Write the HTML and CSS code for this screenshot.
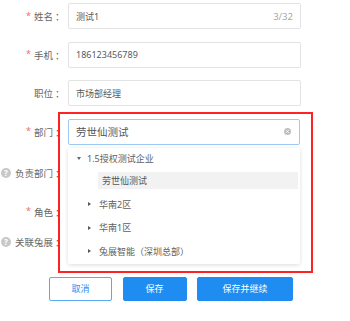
FILE: index.html
```html
<!DOCTYPE html>
<html lang="zh-CN">
<head>
    <meta charset="UTF-8">
    <title>编辑成员</title>
    <link rel="stylesheet" href="styles.css">
</head>
<body>
    <div class="page">
        <div class="form">
            <div class="row">
                <label class="label"><span class="star">*</span>姓名<span class="colon">：</span></label>
                <div class="input">
                    <span class="value">测试1</span>
                    <span class="count">3/32</span>
                </div>
            </div>
            <div class="row">
                <label class="label"><span class="star">*</span>手机<span class="colon">：</span></label>
                <div class="input"><span class="value">186123456789</span></div>
            </div>
            <div class="row">
                <label class="label">职位<span class="colon">：</span></label>
                <div class="input"><span class="value">市场部经理</span></div>
            </div>
            <div class="row">
                <label class="label"><span class="star">*</span>部门<span class="colon">：</span></label>
                <div class="input select">
                    <span class="value big">劳世仙测试</span>
                    <span class="clear">
                        <svg viewBox="0 0 8 8" width="8" height="8"><circle cx="4" cy="4" r="4" fill="#c0c0c0"/><path d="M2.6 2.6 5.4 5.4M5.4 2.6 2.6 5.4" stroke="#fff" stroke-width="1"/></svg>
                    </span>
                </div>
            </div>
            <div class="row row-lead">
                <label class="label"><span class="help">?</span>负责部门<span class="colon">：</span></label>
            </div>
            <div class="row row-role">
                <label class="label"><span class="star">*</span>角色<span class="colon">：</span></label>
            </div>
            <div class="row row-link">
                <label class="label"><span class="help">?</span>关联兔展<span class="colon">：</span></label>
            </div>
            <div class="actions">
                <button class="btn btn-plain">取消</button>
                <button class="btn btn-primary btn-save">保存</button>
                <button class="btn btn-primary btn-wide">保存并继续</button>
            </div>
        </div>

        <!-- department tree dropdown -->
        <div class="dropdown">
            <div class="node node-root">
                <span class="caret down"></span>
                <span>1.5授权测试企业</span>
            </div>
            <div class="node node-leaf">
                <span class="leaf-label">劳世仙测试</span>
            </div>
            <div class="node node-child">
                <span class="caret right"></span>
                <span>华南2区</span>
            </div>
            <div class="node node-child">
                <span class="caret right"></span>
                <span>华南1区</span>
            </div>
            <div class="node node-child">
                <span class="caret right"></span>
                <span>兔展智能（深圳总部）</span>
            </div>
        </div>

        <div class="highlight"></div>
    </div>
</body>
</html>
```

FILE: styles.css
```css
html, body {
    margin: 0;
    padding: 0;
    background: #ffffff;
    font-family: "Noto Sans", "Noto Sans CJK SC", sans-serif;
}
.page {
    position: relative;
    width: 350px;
    height: 321px;
    overflow: hidden;
}
.form {
    display: flex;
    flex-direction: column;
    padding-top: 3px;
}
.row {
    display: flex;
    align-items: center;
    height: 26px;
    margin-bottom: 12.5px;
}
.row-lead {
    margin-top: 3px;
}
.row-role {
    margin-bottom: 4px;
}
.row-link {
    margin-bottom: 22px;
}
.label {
    width: 62.5px;
    flex-shrink: 0;
    display: flex;
    align-items: center;
    justify-content: flex-end;
    font-size: 9.5px;
    color: #666666;
    white-space: nowrap;
}
.colon {
    padding-left: 2px;
    margin-right: -2px;
}
.star {
    color: #f56c6c;
    margin-right: 3px;
    font-size: 9px;
    position: relative;
    top: -1px;
}
.help {
    width: 10px;
    height: 10px;
    border-radius: 50%;
    background: #c8c8c8;
    color: #ffffff;
    font-size: 8px;
    line-height: 10px;
    text-align: center;
    margin-right: 4px;
    font-weight: bold;
}
.input {
    box-sizing: border-box;
    width: 233px;
    height: 26px;
    margin-left: 5.5px;
    border: 1px solid #e3e3e3;
    border-radius: 2px;
    display: flex;
    align-items: center;
    justify-content: space-between;
    padding: 0 7px;
    font-size: 9px;
    color: #5a5a5a;
}
.count {
    color: #a8a8a8;
    font-size: 9.5px;
}
.select {
    width: 232px;
    border-color: #9ccaf5;
}
.value.big {
    font-size: 10.5px;
    color: #555555;
}
.clear {
    display: flex;
    margin-right: 1px;
}
.clear svg {
    width: 7px;
    height: 7px;
}
.actions {
    display: flex;
    gap: 10.5px;
    padding-left: 49px;
}
.btn {
    height: 24px;
    border-radius: 2px;
    font-family: inherit;
    font-size: 9px;
    padding: 0;
    cursor: pointer;
}
.btn-plain {
    width: 63px;
    background: #ffffff;
    border: 1px solid #5aa9f3;
    color: #2f8ded;
}
.btn-primary {
    background: #1e8cf0;
    border: 1px solid #1e8cf0;
    color: #ffffff;
}
.btn-save {
    width: 64px;
}
.btn-wide {
    width: 96px;
}
/* tree dropdown under department select */
.dropdown {
    position: absolute;
    left: 68px;
    top: 148px;
    width: 232px;
    height: 116px;
    box-sizing: border-box;
    background: #ffffff;
    border-radius: 2px;
    box-shadow: 0 1px 4px rgba(0, 0, 0, 0.14);
    display: flex;
    flex-direction: column;
    font-size: 9px;
    color: #606060;
}
.node {
    display: flex;
    align-items: center;
    height: 23.5px;
    flex-shrink: 0;
}
.node-root {
    height: 21px;
    padding-left: 9px;
}
.node-child {
    padding-left: 20px;
}
.node-leaf {
    padding: 0 2px 0 30px;
}
.leaf-label {
    flex: 1;
    height: 17px;
    line-height: 17px;
    padding-left: 4px;
    background: #f2f2f2;
    color: #555555;
}
.caret {
    width: 0;
    height: 0;
}
.caret.down {
    border-left: 2.5px solid transparent;
    border-right: 2.5px solid transparent;
    border-top: 3.5px solid #666666;
    margin-right: 6px;
}
.caret.right {
    border-top: 2.5px solid transparent;
    border-bottom: 2.5px solid transparent;
    border-left: 3.5px solid #555555;
    margin-right: 8px;
}
/* red annotation box */
.highlight {
    position: absolute;
    left: 58px;
    top: 112px;
    width: 255px;
    height: 161px;
    box-sizing: border-box;
    border: 2px solid #ff2222;
    pointer-events: none;
}
```
